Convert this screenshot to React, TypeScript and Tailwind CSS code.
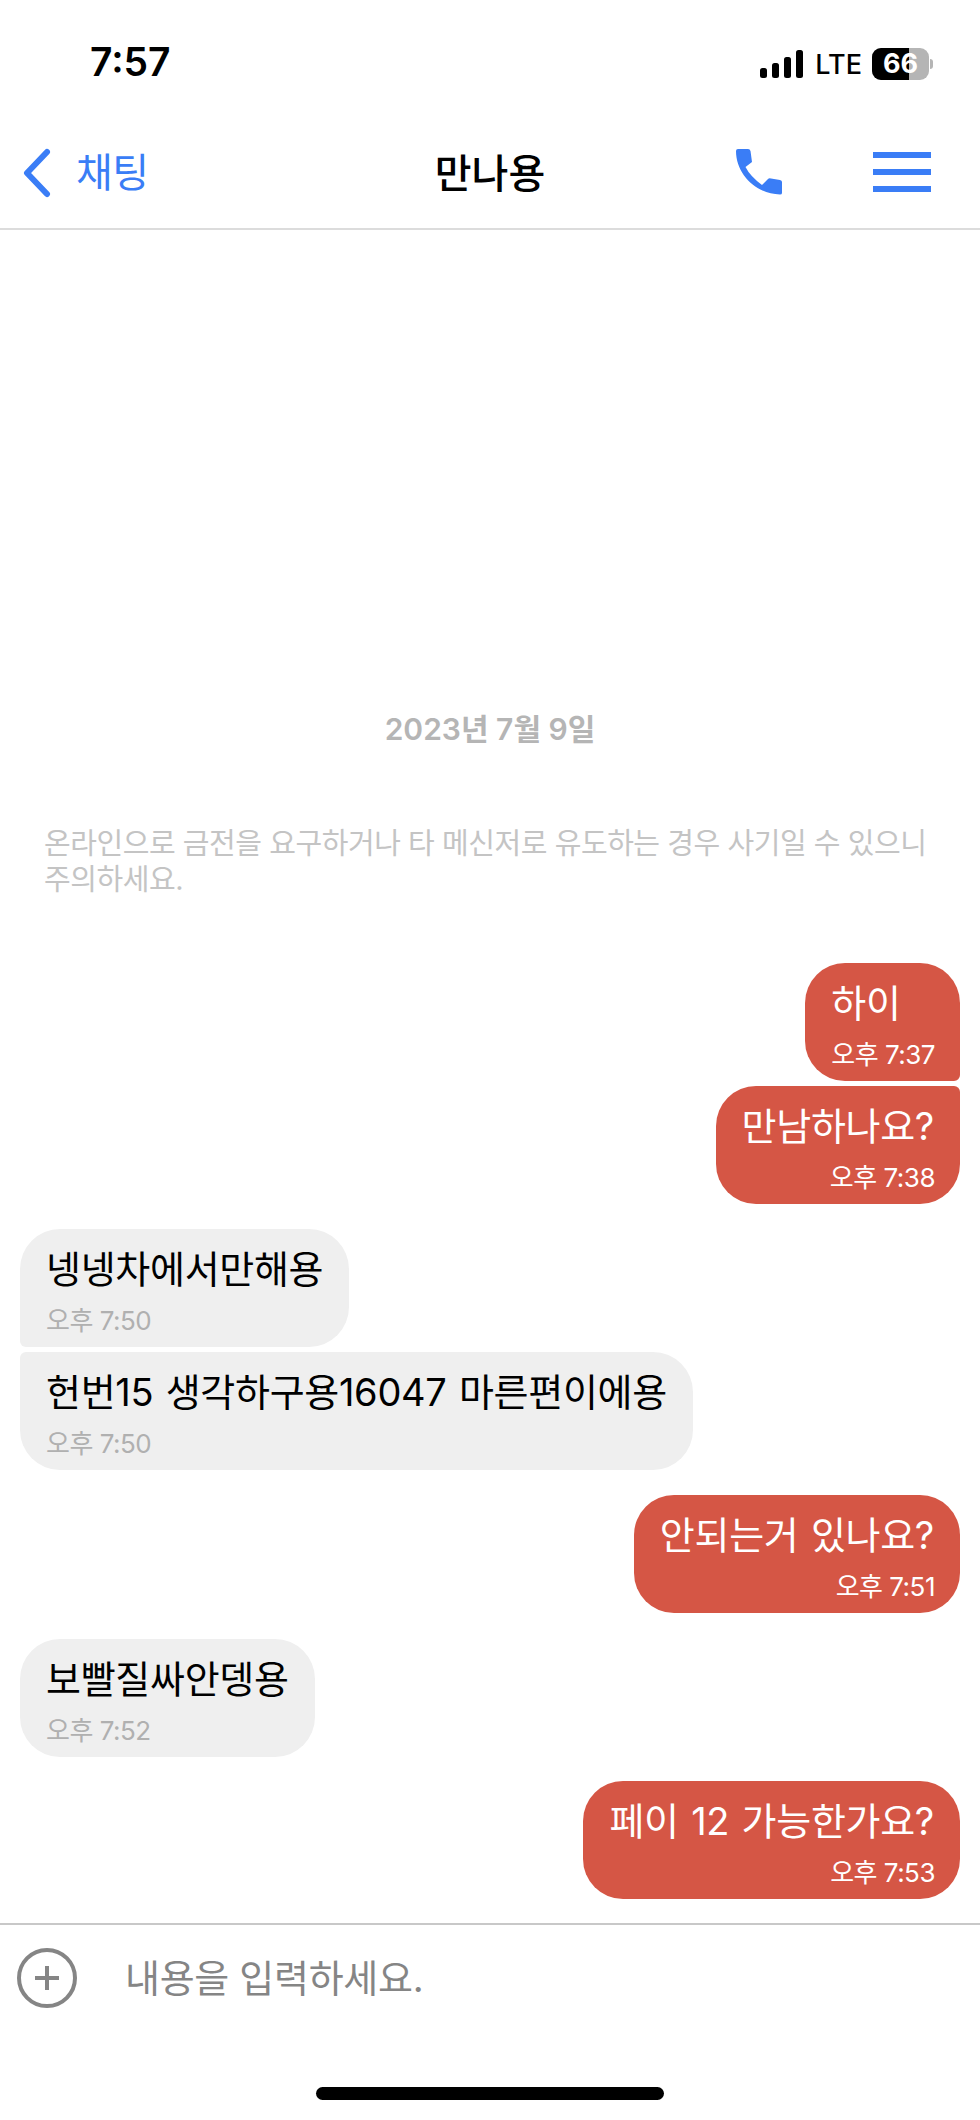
const krFont = "font-['Inter','Noto_Sans_CJK_KR',sans-serif]"

type Msg = {
  text: string
  time: string
  mine: boolean
  gap: string
  corner: string
}

const messages: Msg[] = [
  { text: '하이', time: '오후 7:37', mine: true, gap: 'mt-0', corner: 'rounded-br-[6px]' },
  { text: '만남하나요?', time: '오후 7:38', mine: true, gap: 'mt-[5px]', corner: 'rounded-tr-[6px]' },
  { text: '넹넹차에서만해용', time: '오후 7:50', mine: false, gap: 'mt-[25px]', corner: 'rounded-bl-[6px]' },
  { text: '헌번15 생각하구용16047 마른편이에용', time: '오후 7:50', mine: false, gap: 'mt-[5px]', corner: 'rounded-tl-[6px]' },
  { text: '안되는거 있나요?', time: '오후 7:51', mine: true, gap: 'mt-[25px]', corner: '' },
  { text: '보빨질싸안뎅용', time: '오후 7:52', mine: false, gap: 'mt-[26px]', corner: '' },
  { text: '페이 12 가능한가요?', time: '오후 7:53', mine: true, gap: 'mt-[24px]', corner: '' },
]

function Bubble({ text, time, mine, gap, corner }: Msg) {
  return (
    <div className={`flex ${mine ? 'justify-end' : 'justify-start'} ${gap}`}>
      <div
        className={`flex h-[118px] flex-col rounded-[40px] px-[26px] pt-[14px] ${corner} ${
          mine ? 'bg-[#d55645] text-white' : 'bg-[#efefef] text-black'
        }`}
      >
        <div className="h-[52px] text-[38px] leading-[52px] tracking-[-0.3px] whitespace-nowrap [word-spacing:2px]">{text}</div>
        <div
          className={`mt-[10px] text-[26px] leading-[32px] tracking-[-0.5px] ${
            mine ? '-mr-[1px] self-end text-white' : 'text-[#b0b0b0]'
          }`}
        >
          {time}
        </div>
      </div>
    </div>
  )
}

function Signal() {
  return (
    <svg width="44" height="28" viewBox="0 0 44 28" fill="#000">
      <rect x="0" y="18" width="7" height="10" rx="2.5" />
      <rect x="12" y="13" width="7" height="15" rx="2.5" />
      <rect x="24" y="7" width="7" height="21" rx="2.5" />
      <rect x="36" y="0" width="7" height="28" rx="2.5" />
    </svg>
  )
}

function Battery() {
  return (
    <div className="relative ml-[10px] flex h-[32px] w-[57px] items-center justify-center overflow-hidden rounded-[9px] bg-[#b5b5b5]">
      <div className="absolute inset-y-0 left-0 w-[37px] bg-black" />
      <span className="relative text-[27px] leading-none font-bold text-white">66</span>
    </div>
  )
}

export default function App() {
  return (
    <div className={`flex h-[2120px] w-[980px] flex-col bg-white ${krFont}`}>
      {/* status bar */}
      <div className="flex h-[126px] shrink-0 items-start justify-between pt-[42px] pr-[47px] pl-[90px]">
        <span className="text-[39px] leading-[40px] font-semibold text-black">7:57</span>
        <div className="flex items-center pt-[4px]">
          <Signal />
          <span className="mt-[3px] ml-[11px] text-[27px] leading-[32px] font-medium text-black">LTE</span>
          <Battery />
          <div className="ml-[1px] h-[10px] w-[3px] rounded-r-full bg-[#b5b5b5]" />
        </div>
      </div>

      {/* nav */}
      <div className="relative flex h-[104px] shrink-0 items-center justify-between border-b-2 border-[#dcdcdc] pr-[49px] pl-[23px]">
        <div className="flex items-center gap-[25px] pb-[9px]">
          <svg width="28" height="50" viewBox="0 0 28 50" fill="none" stroke="#3a7df6" strokeWidth="6" strokeLinecap="round" strokeLinejoin="round">
            <path d="M24 4 L4 25 L24 46" />
          </svg>
          <span className="text-[40px] leading-[48px] tracking-[-0.5px] text-[#3a7df6]">채팅</span>
        </div>
        <span className="absolute top-[18px] left-1/2 -translate-x-1/2 text-[40px] leading-[60px] font-medium text-black">
          만나용
        </span>
        <div className="flex items-center gap-[91px] pb-[10px]">
          <svg width="46" height="46" viewBox="0 0 46 46" fill="#3a7df6">
            <path d="M2 0H12Q14 0 14.5 2L16 13L9.5 18Q14 27 26 36L32 30Q33 29 35 29.5L44 31Q46 31.5 46 33V44Q46 45.5 44 45.5C20 45 0 25 0 2Q0 0 2 0Z" />
          </svg>
          <div className="flex w-[58px] flex-col gap-[11px]">
            <div className="h-[6px] bg-[#3a7df6]" />
            <div className="h-[6px] bg-[#3a7df6]" />
            <div className="h-[6px] bg-[#3a7df6]" />
          </div>
        </div>
      </div>

      {/* chat */}
      <div className="flex-1 overflow-hidden px-[20px]">
        <div className="pt-[477px] text-center text-[30px] leading-[44px] font-semibold text-[#b5b5b5]">
          2023년 7월 9일
        </div>
        <div className="mt-[75px] pl-[24px] text-[29px] leading-[36px] tracking-[-0.45px] text-[#c4c4c4]">
          온라인으로 금전을 요구하거나 타 메신저로 유도하는 경우 사기일 수 있으니
          <br />
          주의하세요.
        </div>
        <div className="mt-[65px]">
          {messages.map((m, i) => (
            <Bubble key={i} {...m} />
          ))}
        </div>
      </div>

      {/* input */}
      <div className="flex h-[197px] shrink-0 flex-col border-t-2 border-[#c8c8c8]">
        <div className="flex items-center pt-[23px] pl-[17px]">
          <svg width="60" height="60" viewBox="0 0 60 60" fill="none" stroke="#858585">
            <circle cx="30" cy="30" r="28" strokeWidth="4" />
            <path d="M18 30H42M30 18V42" strokeWidth="4" />
          </svg>
          <span className="ml-[48px] text-[38px] leading-[60px] tracking-[-0.3px] text-[#858585]">내용을 입력하세요.</span>
        </div>
        <div className="mt-auto mb-[20px] flex justify-center">
          <div className="h-[13px] w-[348px] rounded-full bg-black" />
        </div>
      </div>
    </div>
  )
}
